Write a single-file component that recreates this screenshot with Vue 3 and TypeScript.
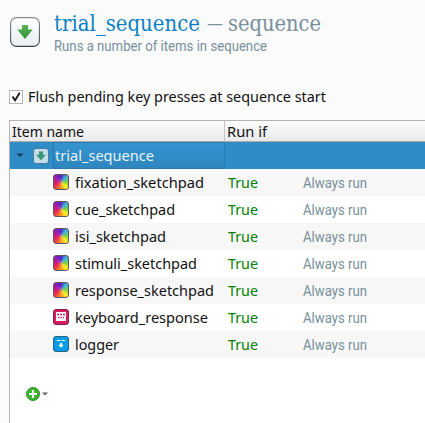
<script setup lang="ts">
import { defineComponent, h, ref } from 'vue'

type IconKind = 'sketchpad' | 'keyboard' | 'logger'

interface SequenceItem {
  name: string
  width: number
  icon: IconKind
}

// Single-line label whose glyphs are fitted to a fixed advance width.
const FitText = defineComponent({
  props: {
    text: { type: String, required: true },
    width: { type: Number, required: true },
    height: { type: Number, default: 20 },
    baseline: { type: Number, default: 15 },
  },
  setup(props) {
    return () =>
      h('svg', { width: props.width, height: props.height, overflow: 'visible', style: { display: 'block', flex: 'none' } }, [
        h('text', { x: 0, y: props.baseline, textLength: props.width, lengthAdjust: 'spacingAndGlyphs', fill: 'currentColor' }, props.text),
      ])
  },
})

const flush = ref(true)
const expanded = ref(true)

const items: SequenceItem[] = [
  { name: 'fixation_sketchpad', width: 129, icon: 'sketchpad' },
  { name: 'cue_sketchpad', width: 100, icon: 'sketchpad' },
  { name: 'isi_sketchpad', width: 91, icon: 'sketchpad' },
  { name: 'stimuli_sketchpad', width: 122, icon: 'sketchpad' },
  { name: 'response_sketchpad', width: 139, icon: 'sketchpad' },
  { name: 'keyboard_response', width: 133, icon: 'keyboard' },
  { name: 'logger', width: 44, icon: 'logger' },
]
</script>

<template>
  <main class="panel">
    <header class="heading">
      <svg class="badge" width="30" height="30" viewBox="0 0 30 30">
        <defs>
          <linearGradient id="badge-bg" x1="0" y1="0" x2="0" y2="1">
            <stop offset="0" stop-color="#fff" /><stop offset="1" stop-color="#e9eef2" />
          </linearGradient>
          <linearGradient id="badge-edge" x1="0" y1="0" x2="0" y2="1">
            <stop offset="0" stop-color="#8c8c8c" /><stop offset="1" stop-color="#404040" />
          </linearGradient>
          <linearGradient id="badge-arrow" x1="0" y1="0" x2="0" y2="1">
            <stop offset="0" stop-color="#55b453" /><stop offset="1" stop-color="#33913a" />
          </linearGradient>
        </defs>
        <rect x=".6" y=".6" width="28.8" height="28.8" rx="6" fill="url(#badge-bg)" stroke="url(#badge-edge)" stroke-width="1.1" />
        <path d="M12 8h6v4.5h4.8L15 22 7.2 12.5H12z" fill="url(#badge-arrow)" />
      </svg>
      <div class="titles">
        <h1 class="title">
          <FitText class="item-title" text="trial_sequence" :width="146" :height="28" :baseline="21" />
          <span class="dash">—</span>
          <FitText text="sequence" :width="93" :height="28" :baseline="21" />
        </h1>
        <FitText class="subtitle" text="Runs a number of items in sequence" :width="213" :height="18" :baseline="13" />
      </div>
    </header>

    <label class="option" @click="flush = !flush">
      <span class="checkbox">
        <svg v-if="flush" width="12" height="12" viewBox="0 0 12 12">
          <path d="M2.5 5.6 5 9.4 9.7 1.7" fill="none" stroke="#111" stroke-width="1.8" />
        </svg>
      </span>
      <FitText text="Flush pending key presses at sequence start" :width="298" />
    </label>

    <section class="table">
      <div class="columns">
        <div class="column name-column"><FitText text="Item name" :width="72" /></div>
        <div class="column"><FitText text="Run if" :width="40" /></div>
      </div>
      <div class="row selected" @click="expanded = !expanded">
        <svg class="expander" width="8" height="5" viewBox="0 0 8 5"><path d="M0 .4h8Q5.7 1.2 4 4.6 2.3 1.2 0 .4z" fill="#153f59" /></svg>
        <svg class="parent-icon" width="16" height="16" viewBox="0 0 16 16">
          <rect x=".5" y=".5" width="15" height="15" rx="2.5" fill="#c3dcea" stroke="#477b98" />
          <path d="M6 3.6h4v3.2h3L8 12.2 3 6.8h3z" fill="#369875" />
        </svg>
        <div class="current-cell"><FitText text="trial_sequence" :width="99" /></div>
      </div>
      <template v-if="expanded">
        <div v-for="item in items" :key="item.name" class="row item">
          <span v-if="item.icon === 'sketchpad'" class="icon sketchpad"></span>
          <svg v-else-if="item.icon === 'keyboard'" class="icon" width="16" height="16" viewBox="0 0 16 16">
            <rect x=".5" y=".5" width="15" height="15" rx="2.5" fill="#d81b60" stroke="#852047" />
            <rect x="3" y="3" width="10" height="9" rx=".6" fill="#fff" />
            <path d="M4 5.5h2m1 0h2m1 0h2M5 8.5h1.5m1 0H9m1 0h1" stroke="#d81b60" stroke-width="1.4" />
          </svg>
          <svg v-else class="icon" width="16" height="16" viewBox="0 0 16 16">
            <rect x=".5" y=".5" width="15" height="15" rx="2.5" fill="#079be5" stroke="#286284" />
            <path d="M4 4.5h3.3m1.4 0H12" stroke="#fff" stroke-width="1.1" />
            <path d="M7.2 6.7h1.6v2.1h2L8 11.8l-2.8-3h2z" fill="#fff" />
          </svg>
          <div class="name"><FitText :text="item.name" :width="item.width" /></div>
          <div class="condition"><FitText text="True" :width="30" /></div>
          <FitText class="meaning" text="Always run" :width="64" />
        </div>
      </template>
      <button class="add" type="button" aria-label="Add item">
        <svg width="14" height="14" viewBox="0 0 14 14">
          <circle cx="7" cy="7" r="6.5" fill="#35b42b" stroke="#398d2d" />
          <path d="M7 3v8M3 7h8" stroke="#fff" stroke-width="2.2" />
        </svg>
        <svg width="6" height="4" viewBox="0 0 6 4"><path d="M0 .4h6L3 3.6z" fill="#666" /></svg>
      </button>
    </section>
  </main>
</template>

<style>
body {
  margin: 0;
  overflow: hidden;
}
</style>

<style scoped>
.panel {
  box-sizing: border-box;
  display: flex;
  flex-direction: column;
  width: 425px;
  height: 423px;
  padding: 10px 0 0 9px;
  background: #fbfbfb;
  color: #111;
  font: 14px "Noto Sans", sans-serif;
  overflow: hidden;
}
.heading {
  display: flex;
  gap: 14px;
  height: 77px;
  padding-left: 1px;
}
.badge {
  flex: none;
  margin-top: 7px;
}
.title {
  display: flex;
  height: 28px;
  margin: 0;
  color: #78909c;
  font: 22px "DejaVu Serif", serif;
}
.item-title {
  color: #0b7fc5;
}
.dash {
  flex: none;
  width: 16px;
  margin: 0 5px 0 7px;
  font-size: 16px;
  line-height: 28px;
}
.subtitle,
.meaning {
  color: #78909c;
  font-family: Roboto, sans-serif;
  font-size: 15px;
}
.meaning {
  font-size: 15.5px;
}
.option {
  display: flex;
  align-items: center;
  gap: 5px;
  height: 20px;
}
.checkbox {
  box-sizing: border-box;
  width: 14px;
  height: 14px;
  border: 1px solid #b5b5b5;
  background: #fff;
}
.checkbox svg {
  display: block;
}
.table {
  flex: 1;
  margin-top: 13px;
  border: solid #b4b4b4;
  border-width: 1px 0 0 1px;
  background: #fff;
}
.columns {
  box-sizing: border-box;
  display: flex;
  height: 21px;
  border-bottom: 1px solid #aaa;
  background: linear-gradient(#fcfcfc, #e9e9e9);
}
.column {
  padding: 1px 0 0 2px;
}
.name-column {
  box-sizing: border-box;
  width: 215px;
  border-right: 1px solid #c4c4c4;
}
.row {
  box-sizing: border-box;
  display: flex;
  height: 27px;
}
.selected {
  padding-left: 6px;
  background: #308cc6;
  color: #e8f3fa;
}
.expander {
  margin: 11px 9px 0 0;
}
.parent-icon {
  margin: 6px 4px 0 0;
}
.current-cell {
  box-sizing: border-box;
  width: 172px;
  padding: 3px 0 0 1px;
  border: 1px solid #287bb0;
  background: linear-gradient(#3494d0, #2f86be);
}
.item {
  padding: 4px 0 0 43px;
}
/* The header and the selected row come first, so the first item is an odd child. */
.item:nth-child(odd) {
  background: #f7f7f7;
}
.icon {
  flex: none;
  width: 16px;
  height: 16px;
  margin: 1px 6px 0 0;
}
.sketchpad {
  box-sizing: border-box;
  border: 1px solid #62535d;
  border-radius: 3px;
  background:
    radial-gradient(circle, #d8909080, transparent 45%),
    conic-gradient(from 0deg, #5425c0, #40b4e0 45deg, #78d43b 90deg, #fff126 135deg, #ffa52a 175deg, #ee4040 225deg, #d51c68 260deg, #951dba 315deg, #5425c0);
}
.name {
  width: 153px;
}
.condition {
  width: 75px;
  color: #008000;
}
.add {
  display: flex;
  align-items: center;
  gap: 2px;
  margin: 29px 0 0 16px;
  padding: 0;
  border: 0;
  background: none;
}
</style>
